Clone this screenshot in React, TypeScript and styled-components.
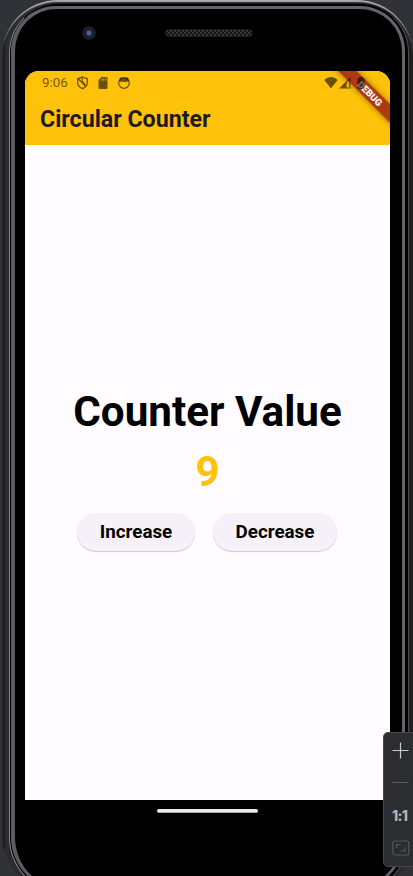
import React, { useState } from "react";
import styled, { createGlobalStyle } from "styled-components";

const Global = createGlobalStyle`
  * { box-sizing: border-box; }
  body { margin: 0; background: #303237; font-family: Roboto, sans-serif; overflow: hidden; }
`;

const Desk = styled.main`
  position: relative;
  width: 413px;
  height: 876px;
  overflow: hidden;
  background: #303237;
`;

const Shell = styled.div`
  width: 411px;
  height: 898px;
  margin-left: 2px;
  padding: 3px 4px 0 7px;
  border-radius: 56px 56px 64px 64px;
  background: linear-gradient(90deg, #2a2c2f 0, #141415 2px, #2c2c2c 3px, #292929 403px, #1b1b1b 411px);
  box-shadow: inset 0 3px 1px -1px #a6acb0;
`;

const Rim = styled.div`
  height: 892px;
  padding: 2px 3px 1px 1px;
  border-radius: 50px 50px 58px 58px;
  background: #000;
  border: solid;
  border-width: 1px;
  border-color: #1c1d1f #4c4c4c #333 #85898c;
`;

const Face = styled.div`
  height: 885px;
  border-radius: 45px 45px 54px 54px;
  border: solid;
  border-width: 3px 3px 2px 4px;
  border-color: #65646c #65646c #34353a #595d64;
  background: #000;
`;

const Bezel = styled.div`
  height: 62px;
  display: flex;
  align-items: flex-start;
  padding: 17px 0 0 67px;
`;

const Camera = styled.div`
  width: 14px;
  height: 14px;
  border-radius: 50%;
  background: radial-gradient(circle, #53699f 0 1px, #25345e 3px, #121622 4px, #202226 5px, #17181b 7px);
`;

const Speaker = styled.div`
  width: 88px;
  height: 8px;
  margin: 3px 0 0 69px;
  border-radius: 4px;
  border: 1px solid #1c1c1c;
  background: repeating-conic-gradient(#151515 0 25%, #383a38 0 50%) 0 0 / 4px 4px;
`;

const Screen = styled.section`
  position: relative;
  width: 365px;
  height: 729px;
  margin-left: 10px;
  overflow: hidden;
  border-radius: 14px 14px 0 0;
  background: #fffbff;
  display: flex;
  flex-direction: column;
`;

const AppBar = styled.header`
  height: 74px;
  flex: none;
  background: #ffc20a;
`;

const StatusBar = styled.div`
  position: relative;
  z-index: 2;
  height: 24px;
  padding: 0 22px 0 17px;
  display: flex;
  align-items: center;
  color: rgba(0, 0, 0, 0.58);
  font-size: 13.3px;
  svg { display: block; }
`;

const Clock = styled.span`
  width: 34px;
  line-height: 24px;
`;

const Notices = styled.div`
  display: flex;
  gap: 8px;
`;

const Signals = styled.div`
  display: flex;
  gap: 1px;
  margin-left: auto;
`;

const Title = styled.h1`
  margin: 0;
  padding-left: 15px;
  font-size: 23.2px;
  line-height: 49px;
  font-weight: 700;
  color: #1d1b1e;
  white-space: nowrap;
`;

const Ribbon = styled.div`
  position: absolute;
  z-index: 1;
  top: 15.5px;
  right: -34.5px;
  width: 110px;
  height: 13px;
  transform: rotate(45deg);
  background: rgba(160, 32, 20, 0.84);
  box-shadow: 0 0 6px rgba(0, 0, 0, 0.45);
  color: #fff;
  font-size: 9.5px;
  line-height: 13px;
  font-weight: 900;
  text-align: center;
`;

const Content = styled.div`
  flex: 1;
  display: flex;
  flex-direction: column;
  align-items: center;
  padding-top: 242px;
`;

const Heading = styled.h2`
  margin: 0;
  font-size: 42.2px;
  line-height: 50px;
  font-weight: 700;
  color: #000;
  white-space: nowrap;
`;

const Value = styled.output`
  margin-top: 10px;
  font-size: 42.2px;
  line-height: 50px;
  font-weight: 700;
  color: #ffc20a;
`;

const Actions = styled.div`
  display: flex;
  gap: 18px;
  margin: 16px 1px 0 0;
`;

const Button = styled.button<{ $width: number }>`
  width: ${(p) => p.$width}px;
  height: 38px;
  padding: 0;
  border: 0;
  border-radius: 19px;
  background: #f6f1f9;
  box-shadow: 0 1px 1px rgba(0, 0, 0, 0.2);
  color: #000;
  font: 700 18.8px/38px Roboto, sans-serif;
`;

const HomeBar = styled.div`
  width: 101px;
  height: 4px;
  margin: 9px 0 0 142px;
  border-radius: 2px;
  background: #ececec;
  border-bottom: 1px solid #aaa;
`;

const Zoom = styled.aside`
  position: absolute;
  left: 383px;
  top: 732px;
  width: 34px;
  height: 135px;
  border-radius: 5px;
  border: 1px solid #45474a;
  background: #2b2d30;
  display: flex;
  flex-direction: column;
  padding-left: 8px;
  svg { display: block; }
`;

const Ratio = styled.span`
  height: 26px;
  margin: 8px 0 6px;
  font: 800 14px/26px Inter, sans-serif;
  letter-spacing: -0.7px;
  color: #b4b4b4;
`;

export default function App() {
  const [count, setCount] = useState(9);
  return (
    <>
      <Global />
      <Desk>
        <Shell>
          <Rim>
            <Face>
              <Bezel>
                <Camera />
                <Speaker />
              </Bezel>
              <Screen>
                <AppBar>
                  <StatusBar>
                    <Clock>9:06</Clock>
                    <Notices>
                      <svg width="13" height="14" viewBox="0 0 13 14" fill="none" stroke="currentColor" strokeWidth="1.3">
                        <path d="M6.5 1 11.3 2.8v3.7c0 3-2 5-4.8 6.2-2.8-1.2-4.8-3.2-4.8-6.2V2.8zM2.6 3.2l6.8 6.8M6.3 2v3.6l3 3" />
                      </svg>
                      <svg width="12" height="14" viewBox="0 0 12 14">
                        <path fill="currentColor" d="M4.5 1h5a1 1 0 0 1 1 1v10a1 1 0 0 1-1 1h-7a1 1 0 0 1-1-1V4z" />
                        <path stroke="#ffc20a" strokeWidth=".8" d="M4.7 2.5v2.2M6.7 2.5v2.2M8.7 2.5v2.2" />
                      </svg>
                      <svg width="14" height="14" viewBox="0 0 14 14">
                        <circle cx="7" cy="7" r="5.3" fill="none" stroke="currentColor" strokeWidth="1.2" />
                        <path fill="currentColor" d="M2.4 3.6 3 1.5l2 .2h4l2-.2.6 2.1V6l-1.6-.5-2 .8-2.5-.8L2.4 6z" />
                      </svg>
                    </Notices>
                    <Signals>
                      <svg width="14" height="14" viewBox="0 0 14 14">
                        <path fill="currentColor" d="M.3 4C4-.1 10-.1 13.7 4L7 12.6z" />
                      </svg>
                      <svg width="12" height="14" viewBox="0 0 12 14">
                        <path fill="currentColor" fillRule="evenodd" d="M0 12.6 11.5 1v11.6zM7.6 6.6v4.8h2.7V3.9z" />
                      </svg>
                      <svg width="16" height="14" viewBox="-2 0 16 14">
                        <path fill="currentColor" d="M5 1h4v1.4h1.6v10.4H3.4V2.4H5z" />
                      </svg>
                    </Signals>
                  </StatusBar>
                  <Title>Circular Counter</Title>
                </AppBar>
                <Content>
                  <Heading>Counter Value</Heading>
                  <Value>{count}</Value>
                  <Actions>
                    <Button $width={118} onClick={() => setCount(count + 1)}>Increase</Button>
                    <Button $width={124} onClick={() => setCount(count - 1)}>Decrease</Button>
                  </Actions>
                </Content>
                <Ribbon>DEBUG</Ribbon>
              </Screen>
              <HomeBar />
            </Face>
          </Rim>
        </Shell>
        <Zoom>
          <svg width="17" height="62" viewBox="0 0 17 62" stroke="#c9cbce">
            <path d="M.5 17.5h16M8.5 9.5v16" strokeWidth="1.2" />
            <path d="M.5 49.5h16" stroke="#5c5e61" />
          </svg>
          <Ratio>1:1</Ratio>
          <svg width="18" height="24" viewBox="0 0 18 24" fill="none" stroke="#54565a" strokeWidth="1.2">
            <rect x=".8" y="6" width="16" height="14" rx="2" />
            <path d="M4.5 13V9.5H9M13 12.5V16H8.5" />
          </svg>
        </Zoom>
      </Desk>
    </>
  );
}
